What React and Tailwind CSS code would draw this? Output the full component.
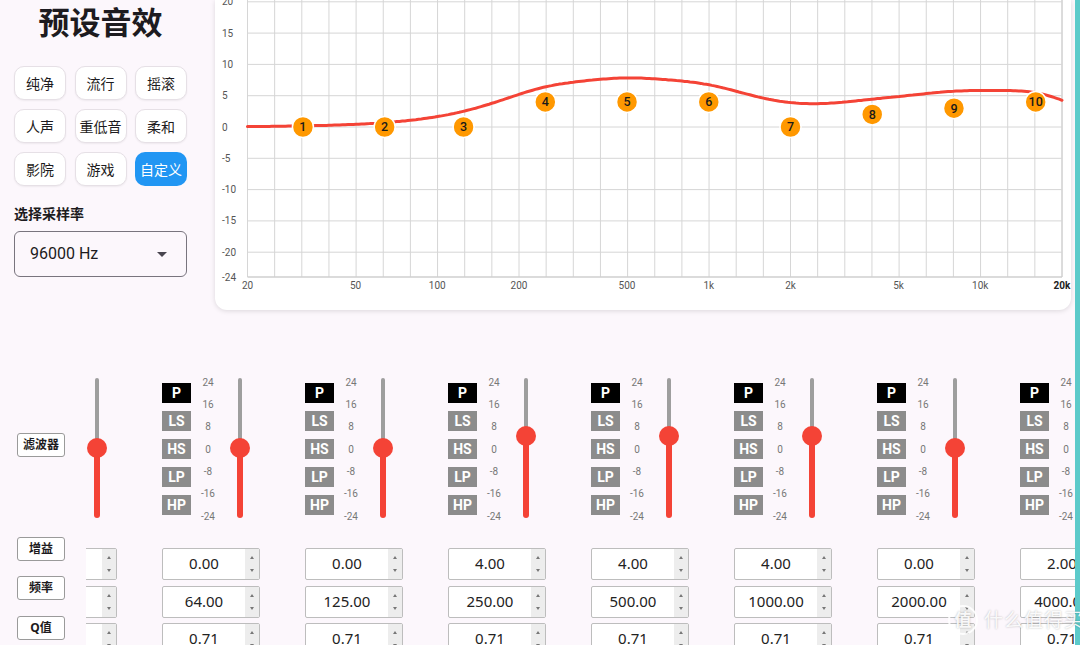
import React from 'react'

const BANDS = [
  { f: 32, g: 0 },
  { f: 64, g: 0 },
  { f: 125, g: 0 },
  { f: 250, g: 4 },
  { f: 500, g: 4 },
  { f: 1000, g: 4 },
  { f: 2000, g: 0 },
  { f: 4000, g: 2 },
  { f: 8000, g: 3 },
  { f: 16000, g: 4 },
]

const PRESETS = ['纯净', '流行', '摇滚', '人声', '重低音', '柔和', '影院', '游戏', '自定义']

// chart geometry, in card coordinates
const PX0 = 32.5
const PX1 = 847
const Y0 = 127
const DB = 6.26
const YB = 277

const fx = (f) => PX0 + ((PX1 - PX0) / 3) * Math.log10(f / 20)
const gy = (g) => Y0 - g * DB

function peakDb(f, f0, g, Q, fs) {
  const A = Math.pow(10, g / 40)
  const w0 = (2 * Math.PI * f0) / fs
  const alpha = Math.sin(w0) / (2 * Q)
  const cw = Math.cos(w0)
  const b0 = 1 + alpha * A, b1 = -2 * cw, b2 = 1 - alpha * A
  const a0 = 1 + alpha / A, a1 = -2 * cw, a2 = 1 - alpha / A
  const w = (2 * Math.PI * f) / fs
  const c1 = Math.cos(w), s1 = Math.sin(w), c2 = Math.cos(2 * w), s2 = Math.sin(2 * w)
  const nr = b0 + b1 * c1 + b2 * c2, ni = -(b1 * s1 + b2 * s2)
  const dr = a0 + a1 * c1 + a2 * c2, di = -(a1 * s1 + a2 * s2)
  return 10 * Math.log10((nr * nr + ni * ni) / (dr * dr + di * di))
}

function curvePath() {
  const pts = []
  for (let i = 0; i <= 300; i++) {
    const f = 20 * Math.pow(1000, i / 300)
    let db = 0
    BANDS.forEach((b) => {
      db += peakDb(f, b.f, b.g, 0.71, 96000)
    })
    pts.push(`${i === 0 ? 'M' : 'L'}${fx(f).toFixed(1)},${gy(db).toFixed(1)}`)
  }
  return pts.join(' ')
}

function Chart() {
  const yTicks = [20, 15, 10, 5, 0, -5, -10, -15, -20]
  const xTicks = [
    [20, '20'], [50, '50'], [100, '100'], [200, '200'], [500, '500'],
    [1000, '1k'], [2000, '2k'], [5000, '5k'], [10000, '10k'], [20000, '20k'],
  ]
  const step = (PX1 - PX0) / 30
  return (
    <svg width="856" height="310" className="block" style={{ fontFamily: 'Roboto, "Liberation Sans", sans-serif' }}>
      {Array.from({ length: 31 }).map((_, i) => (
        <line key={i} x1={PX0 + i * step} x2={PX0 + i * step} y1="0" y2={YB} stroke={i === 30 ? '#b8b8b8' : '#d6d6d6'} strokeWidth="1" />
      ))}
      {yTicks.map((t) => (
        <line key={t} x1={PX0} x2={PX1} y1={gy(t)} y2={gy(t)} stroke="#d6d6d6" strokeWidth="1" />
      ))}
      <line x1={PX0} x2={PX1} y1={YB} y2={YB} stroke="#cfcfcf" strokeWidth="1.5" />
      {yTicks.map((t) => (
        <text key={t} x="7" y={gy(t) + 3.5} fontSize="10" fill="#555">{t}</text>
      ))}
      <text x="7" y={YB + 3.5} fontSize="10" fill="#555">-24</text>
      {xTicks.map(([f, l]) => (
        <text key={l} x={fx(f)} y="289" fontSize="10" fill={l === '20k' ? '#222' : '#555'} fontWeight={l === '20k' ? 700 : 400} textAnchor="middle">{l}</text>
      ))}
      <path d={curvePath()} fill="none" stroke="#f44336" strokeWidth="3" strokeLinecap="round" />
      {BANDS.map((b, i) => (
        <g key={i}>
          <circle cx={fx(b.f)} cy={gy(b.g)} r="10.5" fill="#ff9800" stroke="#fff" strokeWidth="1.5" />
          <text x={fx(b.f)} y={gy(b.g) + 4.4} fontSize="12.5" fontWeight="500" fill="#1a1a1a" textAnchor="middle">{i + 1}</text>
        </g>
      ))}
    </svg>
  )
}

function LeftPanel() {
  return (
    <div className="w-[215px] shrink-0 pl-[14px] pt-[4px]">
      <div className="w-[173px] text-center text-[31px] leading-[37px] font-bold text-[#1d1b20]">预设音效</div>
      <div className="mt-[25px] grid grid-cols-[52px_52px_52px] gap-x-[8.5px] gap-y-[9px]">
        {PRESETS.map((p) => (
          <div
            key={p}
            className={
              p === '自定义'
                ? 'h-[34px] rounded-[10px] bg-[#2196f3] text-white text-[14px] flex items-center justify-center'
                : 'h-[34px] rounded-[10px] bg-white border border-[#e6e0e6] shadow-[0_1px_2px_rgba(0,0,0,0.06)] text-[#1d1b20] text-[14px] flex items-center justify-center'
            }
          >
            {p}
          </div>
        ))}
      </div>
      <div className="mt-[18px] text-[14px] leading-[20px] font-bold text-[#1d1b20]">选择采样率</div>
      <div className="mt-[7px] w-[173px] h-[46px] rounded-[6px] border border-[#79747e] flex items-center pl-[15px] pr-[19px] justify-between">
        <span className="text-[16px] text-[#1d1b20]" style={{ fontFamily: 'Roboto, sans-serif' }}>96000 Hz</span>
        <span className="w-0 h-0 border-l-[5px] border-r-[5px] border-t-[5px] border-l-transparent border-r-transparent border-t-[#49454f]" />
      </div>
    </div>
  )
}

function Slider({ g }) {
  const c = 70 - (g / 48) * 140
  return (
    <div className="w-[30px] h-[140px] mt-[8px] flex flex-col items-center">
      <div className="w-[4px] bg-[#9e9e9e] rounded-t-full" style={{ height: c }} />
      <div className="w-[20px] h-[20px] -my-[10px] rounded-full bg-[#f44336] relative z-10 shrink-0" />
      <div className="w-[6px] flex-1 bg-[#f44336] rounded-b-full" />
    </div>
  )
}

function NumField({ v, className }) {
  return (
    <div className={`w-[98px] h-[32px] bg-white border border-[#bdbdbd] rounded-[2px] flex ${className}`}>
      <div className="flex-1 flex items-center justify-center text-[15px] leading-[20px] pb-[2px] text-[#222]" style={{ fontFamily: '"Noto Sans", sans-serif' }}>{v}</div>
      <div className="w-[14px] bg-[#ededed] flex flex-col items-center justify-between py-[7px]">
        <span className="w-0 h-0 border-l-[2.5px] border-r-[2.5px] border-b-[3px] border-l-transparent border-r-transparent border-b-[#777]" />
        <span className="w-0 h-0 border-l-[2.5px] border-r-[2.5px] border-t-[3px] border-l-transparent border-r-transparent border-t-[#777]" />
      </div>
    </div>
  )
}

function BandColumn({ band }) {
  const types = ['P', 'LS', 'HS', 'LP', 'HP']
  const scale = ['24', '16', '8', '0', '-8', '-16', '-24']
  return (
    <div className="w-[143px] shrink-0 flex flex-col">
      <div className="flex h-[160px]">
        <div className="w-[29px] pt-[13px] flex flex-col gap-[8px]">
          {types.map((t) => (
            <div
              key={t}
              className={`h-[20px] flex items-center justify-center text-white text-[14px] font-bold ${t === 'P' ? 'bg-black' : 'bg-[#8c8c8c]'}`}
              style={{ fontFamily: 'Roboto, sans-serif' }}
            >
              {t}
            </div>
          ))}
        </div>
        <div className="w-[34px] pt-[1px] flex flex-col">
          {scale.map((s) => (
            <div key={s} className="h-[22.33px] flex items-center justify-center text-[10px] text-[#777]" style={{ fontFamily: 'Roboto, sans-serif' }}>{s}</div>
          ))}
        </div>
        <Slider g={band.g} />
      </div>
      <NumField v={band.g.toFixed(2)} className="mt-[18px]" />
      <NumField v={band.f.toFixed(2)} className="mt-[6px]" />
      <NumField v="0.71" className="mt-[5px]" />
    </div>
  )
}

function LabelBtn({ children, className }) {
  return (
    <div className={`w-[48px] h-[24px] bg-white border border-[#9a9a9a] rounded-[3px] flex items-center justify-center text-[12px] font-bold text-[#1d1b20] ${className}`}>
      {children}
    </div>
  )
}

export default function App() {
  return (
    <div
      className="w-[1080px] h-[645px] overflow-hidden bg-[#fcf7fc] flex relative"
      style={{ fontFamily: '"Noto Sans", "Noto Sans CJK SC", sans-serif' }}
    >
      <div className="w-[1075px] flex flex-col">
        <div className="flex h-[310px]">
          <LeftPanel />
          <div className="w-[856px] h-[310px] bg-white rounded-b-[12px] shadow-[0_1px_5px_rgba(0,0,0,0.13)] overflow-hidden">
            <Chart />
          </div>
        </div>
        <div className="mt-[60px] flex flex-1 overflow-hidden">
          <div className="w-[86px] shrink-0 pl-[17px] pt-[63px] flex flex-col">
            <LabelBtn>滤波器</LabelBtn>
            <LabelBtn className="mt-[80px]">增益</LabelBtn>
            <LabelBtn className="mt-[15px]">频率</LabelBtn>
            <LabelBtn className="mt-[16px]">Q值</LabelBtn>
          </div>
          <div className="flex-1 overflow-hidden">
            <div className="flex -ml-[67px]">
              {BANDS.map((b, i) => (
                <BandColumn key={i} band={b} />
              ))}
            </div>
          </div>
        </div>
      </div>
      <div className="w-[5px] bg-[#5ccaca]" />
      {/* watermark */}
      <div className="absolute left-[948px] top-[605px] flex items-center gap-[6px] whitespace-nowrap text-white/90 [text-shadow:0_0_2px_rgba(0,0,0,0.3)]">
        <span className="w-[30px] h-[30px] shrink-0 rounded-full border-2 border-white/90 flex items-center justify-center text-[17px] font-bold">值</span>
        <span className="text-[19px] tracking-[1px]">什么值得买</span>
      </div>
    </div>
  )
}
